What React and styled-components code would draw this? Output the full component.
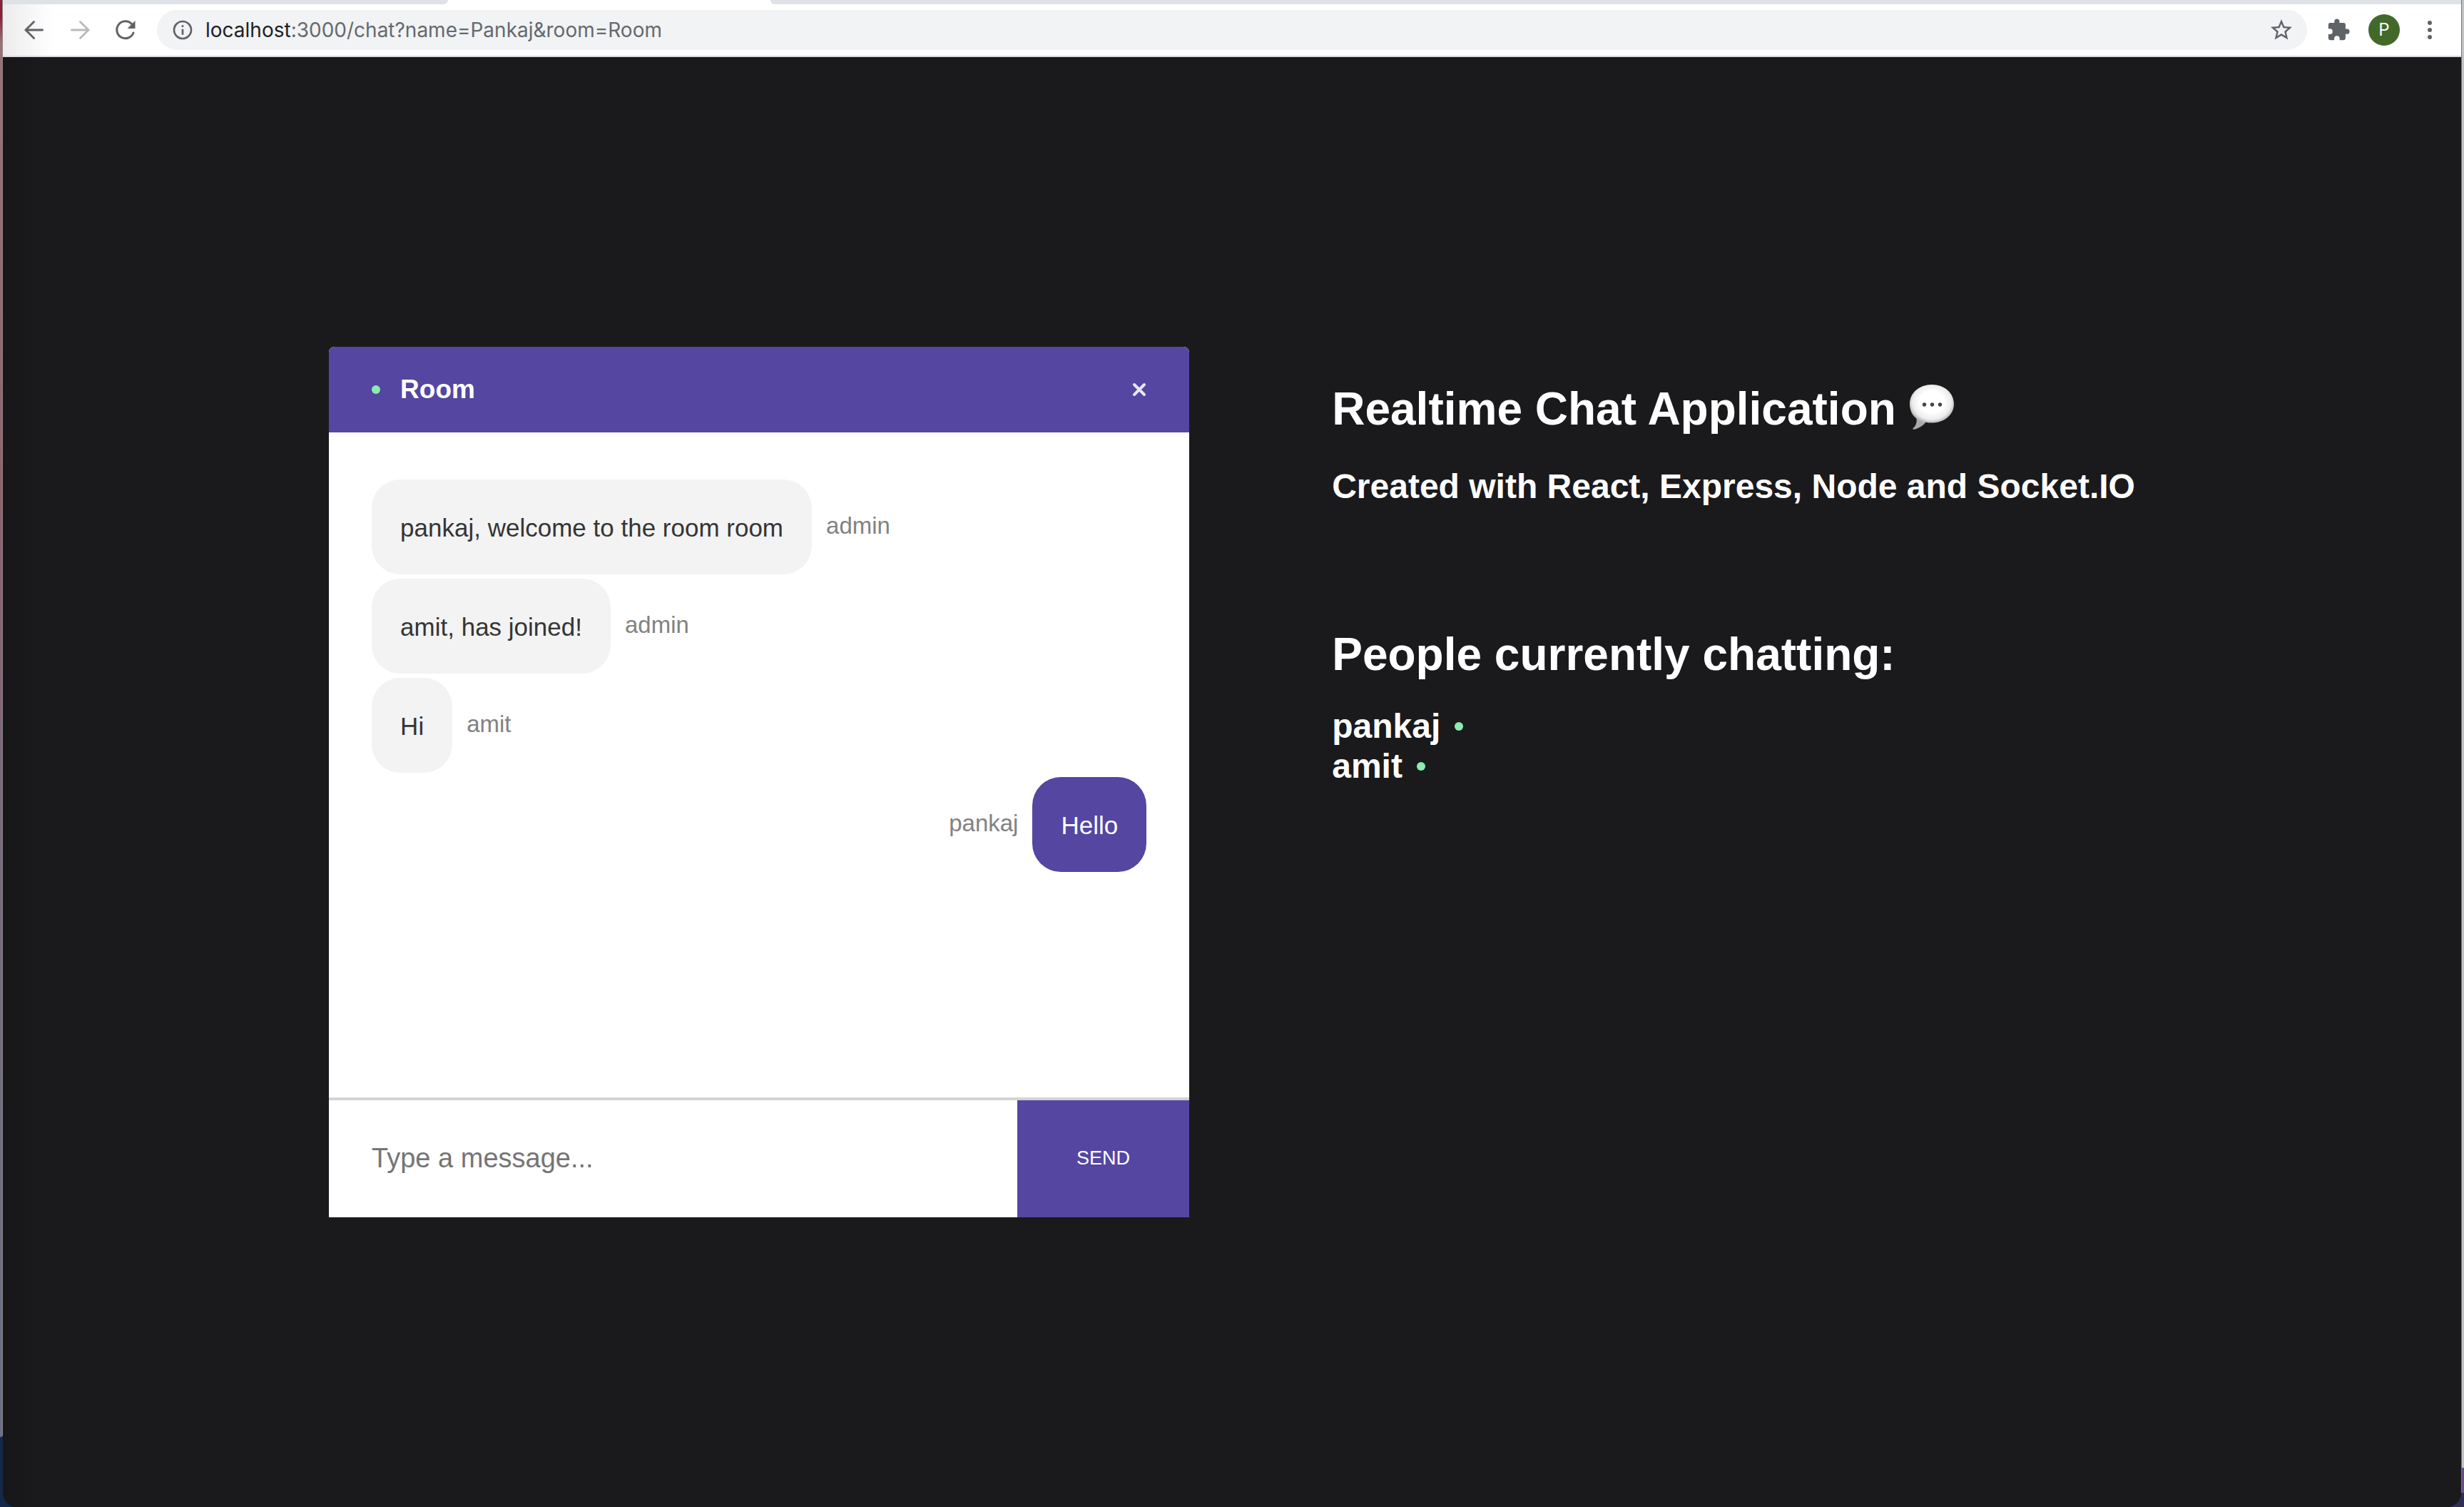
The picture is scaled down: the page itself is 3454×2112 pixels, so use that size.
import React from "react";
import styled, { createGlobalStyle } from "styled-components";

const colors = {
  ink: "#1a1a1d",
  purple: "#5446a1",
  online: "#8cecaf",
  chrome: "#5f6368",
};

const GlobalStyle = createGlobalStyle`
  *, *::before, *::after { box-sizing: border-box; }
  body { margin: 0; font-family: "Liberation Sans", Helvetica, Arial, sans-serif; background: #14284a; }
  h1, h2, h3, p, ul { margin: 0; padding: 0; }
  button, input { font-family: inherit; border: 0; padding: 0; margin: 0; background: none; }
  svg { display: block; }
`;

const Desktop = styled.div`
  display: flex;
  height: 100vh;
  background: linear-gradient(90deg, #14284a 50%, #322d55 50%);
`;

const LeftEdge = styled.div`
  width: 4px;
  margin-bottom: 98px;
  border-right: 1px solid #8d8489;
  border-bottom-right-radius: 4px;
  background: linear-gradient(#8a2036 0, #8a2036 24px, #9b7277 60px, #94606b 35%, #7b6a80 55%, #6b7184 90%);
`;

const RightEdge = styled.div`
  width: 4px;
  margin-bottom: 20px;
  background: linear-gradient(#c3c2c2 0, #c3c2c2 2057px, #674c88 2057px);
  border-left: 1px solid #77767a;
`;

const Browser = styled.div`
  flex: 1;
  min-width: 0;
  display: flex;
  flex-direction: column;
  overflow: hidden;
  border-radius: 0 0 20px 20px;
  background: ${colors.ink};
`;

const TabStrip = styled.div`
  display: flex;
  height: 6px;
  background: #fff;
`;

const Tabs = styled.div`
  background: #dee1e6;
  flex: ${(p) => (p.$rest ? "1" : "0 0 624px")};
  margin-left: ${(p) => (p.$rest ? "452px" : "0")};
  border-radius: ${(p) => (p.$rest ? "0 0 0 8px" : "0 0 8px 0")};
`;

const Toolbar = styled.header`
  display: flex;
  align-items: center;
  height: 74px;
  padding: 0 26px;
  border-bottom: 2px solid #dcdde1;
  background: linear-gradient(90deg, #ececec 0, #fff 72px);
`;

const ToolButton = styled.button`
  display: flex;
  align-items: center;
  justify-content: center;
  width: 36px;
  height: 36px;
  margin-right: 28px;
  color: ${(p) => (p.disabled ? "#bababc" : colors.chrome)};
`;

const AddressBar = styled.div`
  flex: 1;
  display: flex;
  align-items: center;
  height: 56px;
  margin-left: -2px;
  padding: 0 18px 0 20px;
  border-radius: 28px;
  background: #f1f3f4;
  color: ${colors.chrome};
`;

const Url = styled.span`
  flex: 1;
  margin-left: 16px;
  font: 28px/36px Inter, sans-serif;
  color: #66696d;

  b {
    font-weight: 400;
    color: #202124;
  }
`;

const StarButton = styled(ToolButton)`
  margin: 0;
`;

const Actions = styled.div`
  display: flex;
  align-items: center;
  gap: 24px;
  margin-left: 26px;
`;

const ActionButton = styled(ToolButton)`
  margin: 0;
`;

const Avatar = styled.button`
  width: 44px;
  height: 44px;
  border-radius: 50%;
  background: #42692a;
  color: #fff;
  font: 24px/44px Inter, sans-serif;
`;

const Page = styled.main`
  flex: 1;
  min-height: 0;
  display: flex;
  justify-content: center;
  align-items: center;
  background: linear-gradient(90deg, #171719 0, ${colors.ink} 60px);
  color: #fff;
`;

const ChatCard = styled.section`
  display: flex;
  flex-direction: column;
  width: 35%;
  height: 60%;
  border-radius: 8px 8px 0 0;
  overflow: hidden;
  background: #fff;
`;

const ChatHeader = styled.div`
  display: flex;
  align-items: center;
  justify-content: space-between;
  height: 120px;
  padding: 0 60px;
  background: ${colors.purple};
`;

const RoomTitle = styled.div`
  display: flex;
  align-items: center;
  gap: 28px;

  h3 {
    font-size: 37px;
    line-height: 44px;
  }
`;

const OnlineDot = styled.span`
  width: 12px;
  height: 12px;
  border-radius: 50%;
  background: ${colors.online};
`;

const CloseLink = styled.a`
  color: #e9e6f5;
`;

const Messages = styled.div`
  flex: 1;
  display: flex;
  flex-direction: column;
  gap: 6px;
  padding: 66px 60px 0;
  overflow: auto;
`;

const MessageRow = styled.div`
  display: flex;
  flex-direction: ${(p) => (p.$own ? "row-reverse" : "row")};
  align-items: center;
  gap: 20px;
`;

const Bubble = styled.p`
  padding: 47px 40px 45px;
  border-radius: 40px;
  font-size: 35px;
  line-height: 41px;
  background: ${(p) => (p.$own ? colors.purple : "#f3f3f3")};
  color: ${(p) => (p.$own ? "#fff" : "#353535")};
`;

const Sender = styled.span`
  padding-bottom: 4px;
  font-size: 33px;
  line-height: 36px;
  color: #828282;
`;

const MessageForm = styled.form`
  display: flex;
  height: 168px;
  border-top: 4px solid #d3d3d3;
`;

const MessageInput = styled.input`
  flex: 1;
  min-width: 0;
  padding: 0 60px;
  font-size: 38px;
  color: #353535;
  outline: none;

  &::placeholder {
    color: #757575;
    opacity: 1;
  }
`;

const SendButton = styled.button`
  width: 20%;
  font-size: 27px;
  background: ${colors.purple};
  color: #fff;
`;

const Info = styled.aside`
  align-self: stretch;
  margin: auto 0 auto 200px;
  height: 60%;
  padding-top: 50px;
`;

const Title = styled.h1`
  display: flex;
  align-items: center;
  gap: 18px;
  font-size: 64px;
  line-height: 74px;
`;

const Subtitle = styled.h2`
  margin-top: 44px;
  font-size: 48px;
  line-height: 56px;
`;

const People = styled.div`
  margin-top: 170px;
`;

const PeopleList = styled.ul`
  margin-top: 36px;
  list-style: none;
  font-size: 48px;
  font-weight: 700;
  line-height: 56px;
`;

const Person = styled.li`
  display: flex;
  align-items: center;
  gap: 20px;
`;

const BackIcon = () => (
  <svg width="36" height="36" viewBox="0 0 24 24" fill="none" stroke="currentColor" strokeWidth="1.9" strokeLinecap="round">
    <path d="M19.700 12H4.500M11.700 4.300L4 12l7.700 7.700" />
  </svg>
);
const ForwardIcon = () => (
  <svg width="36" height="36" viewBox="0 0 24 24" fill="none" stroke="currentColor" strokeWidth="1.9" strokeLinecap="round">
    <path d="M4.300 12h15.200M12.300 4.300L20 12l-7.700 7.700" />
  </svg>
);
const ReloadIcon = () => (
  <svg width="36" height="36" viewBox="0 0 36 36" fill="none">
    <path d="M29 22a12 12 0 1 1-2.500-12.500" stroke="currentColor" strokeWidth="3" strokeLinecap="round" />
    <path d="M31.500 5v11H20.500z" fill="currentColor" />
  </svg>
);
const InfoIcon = () => (
  <svg width="32" height="32" viewBox="0 0 24 24" fill="currentColor">
    <path d="M11 7h2v2h-2zm0 4h2v6h-2zm1-9a10 10 0 1 0 0 20 10 10 0 0 0 0-20zm0 18a8 8 0 1 1 0-16 8 8 0 0 1 0 16z" />
  </svg>
);
const StarIcon = () => (
  <svg width="36" height="36" viewBox="0 0 24 24" fill="currentColor">
    <path d="m22 9.24-7.19-.62L12 2 9.19 8.63 2 9.24l5.46 4.73L5.82 21 12 17.27 18.18 21l-1.63-7.03L22 9.24zM12 15.4l-3.76 2.27 1-4.28-3.32-2.88 4.38-.38L12 6.1l1.71 4.04 4.38.38-3.32 2.88 1 4.28L12 15.4z" />
  </svg>
);
const PuzzleIcon = () => (
  <svg width="34" height="34" viewBox="0 0 24 24" fill="currentColor">
    <path d="M20.5 11H19V7a2 2 0 0 0-2-2h-4V3.500a2.500 2.500 0 0 0-5 0V5H4a2 2 0 0 0-2 2v3.800h1.500a2.700 2.700 0 0 1 0 5.400H2V20a2 2 0 0 0 2 2h3.800v-1.500a2.700 2.700 0 0 1 5.400 0V22H17a2 2 0 0 0 2-2v-4h1.500a2.500 2.500 0 0 0 0-5z" />
  </svg>
);
const MenuIcon = () => (
  <svg width="36" height="36" viewBox="0 0 36 36" fill="currentColor">
    <circle cx="18" cy="8" r="3" />
    <circle cx="18" cy="18" r="3" />
    <circle cx="18" cy="28" r="3" />
  </svg>
);
const CloseIcon = () => (
  <svg width="20" height="20" viewBox="0 0 20 20" fill="none" stroke="currentColor" strokeWidth="4" strokeLinecap="round">
    <path d="M3 3l14 14M17 3L3 17" />
  </svg>
);
const SpeechIcon = () => (
  <svg width="64" height="70" viewBox="0 0 64 70" role="img" aria-label="speech balloon">
    <defs>
      <radialGradient id="balloon" gradientUnits="userSpaceOnUse" cx="32" cy="25" r="34" gradientTransform="translate(0 3) scale(1 0.9)">
        <stop offset="0.5" stopColor="#fff" />
        <stop offset="0.8" stopColor="#ececec" />
        <stop offset="1" stopColor="#a9a9a9" />
      </radialGradient>
    </defs>
    <path
      d="M32 1C14.500 1 1 12.500 1 28c0 9 3.500 16 9.500 20.500 1 6-1.500 11-5 14 -.5 1.200.2 1.600 1.500 1.300 7-1.500 12.500-5.300 16.500-10.100 2.700.6 5.500.9 8.500.9 17.500 0 31-11.100 31-26.600S49.500 1 32 1z"
      fill="url(#balloon)"
    />
    <circle cx="21.500" cy="29" r="2.700" fill="#444" />
    <circle cx="32.500" cy="29" r="2.700" fill="#444" />
    <circle cx="43.500" cy="29" r="2.700" fill="#444" />
  </svg>
);

const messages = [
  { user: "admin", text: "pankaj, welcome to the room room" },
  { user: "admin", text: "amit, has joined!" },
  { user: "amit", text: "Hi" },
  { user: "pankaj", text: "Hello", own: true },
];

const people = ["pankaj", "amit"];

export default function App() {
  return (
    <Desktop>
      <GlobalStyle />
      <LeftEdge />
      <Browser>
        <TabStrip>
          <Tabs />
          <Tabs $rest />
        </TabStrip>
        <Toolbar>
          <ToolButton aria-label="Back"><BackIcon /></ToolButton>
          <ToolButton aria-label="Forward" disabled><ForwardIcon /></ToolButton>
          <ToolButton aria-label="Reload"><ReloadIcon /></ToolButton>
          <AddressBar>
            <InfoIcon />
            <Url><b>localhost</b>:3000/chat?name=Pankaj&amp;room=Room</Url>
            <StarButton aria-label="Bookmark"><StarIcon /></StarButton>
          </AddressBar>
          <Actions>
            <ActionButton aria-label="Extensions"><PuzzleIcon /></ActionButton>
            <Avatar>P</Avatar>
            <ActionButton aria-label="Menu"><MenuIcon /></ActionButton>
          </Actions>
        </Toolbar>
        <Page>
          <ChatCard>
            <ChatHeader>
              <RoomTitle>
                <OnlineDot />
                <h3>Room</h3>
              </RoomTitle>
              <CloseLink href="/" aria-label="Leave room"><CloseIcon /></CloseLink>
            </ChatHeader>
            <Messages>
              {messages.map((m) => (
                <MessageRow key={m.text} $own={m.own}>
                  <Bubble $own={m.own}>{m.text}</Bubble>
                  <Sender>{m.user}</Sender>
                </MessageRow>
              ))}
            </Messages>
            <MessageForm onSubmit={(e) => e.preventDefault()}>
              <MessageInput type="text" placeholder="Type a message..." aria-label="Message" />
              <SendButton type="submit">SEND</SendButton>
            </MessageForm>
          </ChatCard>
          <Info>
            <Title>Realtime Chat Application <SpeechIcon /></Title>
            <Subtitle>Created with React, Express, Node and Socket.IO</Subtitle>
            <People>
              <Title>People currently chatting:</Title>
              <PeopleList>
                {people.map((name) => (
                  <Person key={name}>{name}<OnlineDot /></Person>
                ))}
              </PeopleList>
            </People>
          </Info>
        </Page>
      </Browser>
      <RightEdge />
    </Desktop>
  );
}
